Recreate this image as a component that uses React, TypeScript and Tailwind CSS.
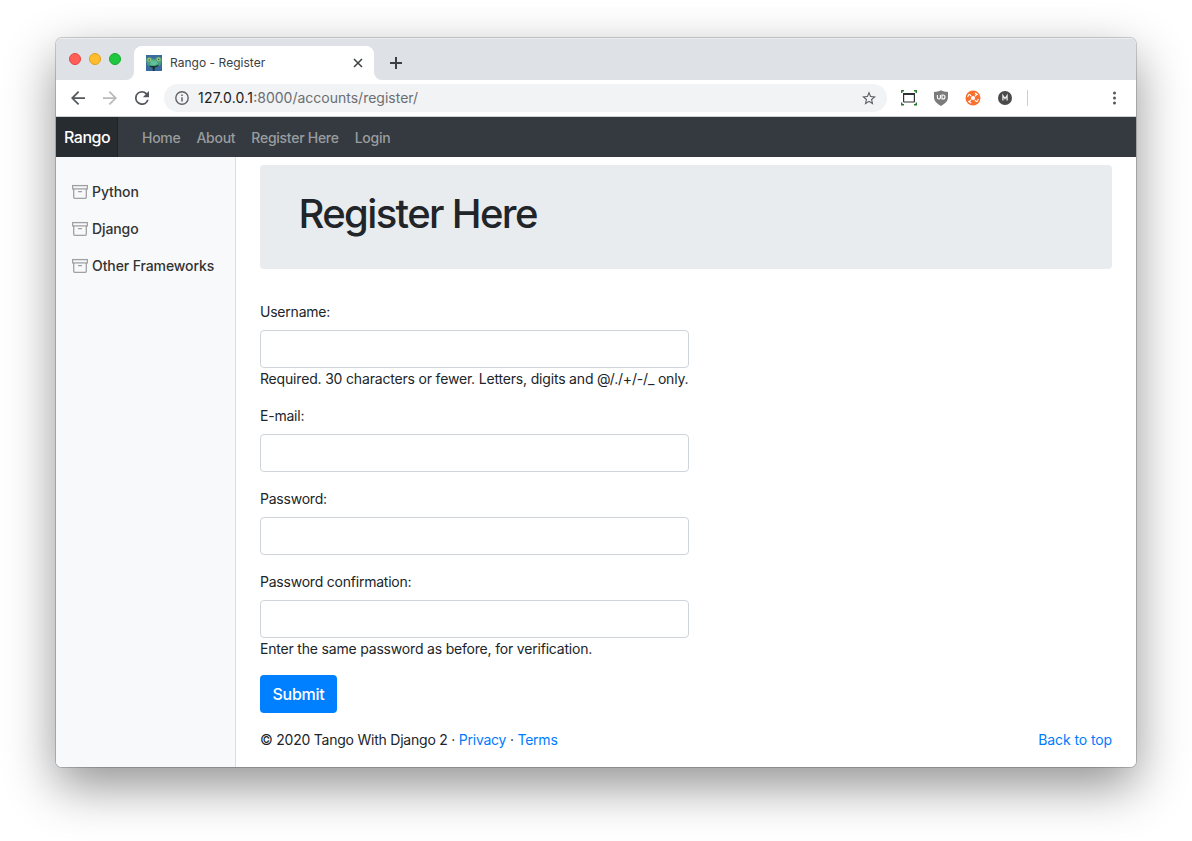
import React from "react";

function Favicon() {
  return (
    <svg width="16" height="16" viewBox="0 0 16 16" className="shrink-0">
      <rect width="16" height="16" fill="#3a6a9e" />
      <path d="M0 5C0 3 2 2 4 2.300 5.700 2.500 6.500 4 8 4s2-2 4-2.200c2.200-.2 4 1.200 4 3.200 0 1.800-1 2.200-1 3.500 0 2-1.800 3-4 3H5C2.500 11.500 1 10 1 8.500 1 7.500 0 7 0 5z" fill="#4a9f7e" />
      <path d="M5 5.500h5l2 3-3.500 2L4 9.500z" fill="#5fc09a" />
      <circle cx="3.300" cy="4.800" r="2" fill="#9cc27c" />
      <circle cx="12.600" cy="4.400" r="2" fill="#9cc27c" />
      <circle cx="3.200" cy="4.900" r=".7" fill="#265244" />
      <circle cx="12.700" cy="4.500" r=".7" fill="#265244" />
      <path d="M3 10.500c3 .8 7 .8 10-.7l-1 1.700-3 .7-.5 3.800H7l-.5-3.600-2.500-.7z" fill="#17352f" />
    </svg>
  );
}

function ArchiveIcon() {
  return (
    <svg width="16" height="16" viewBox="0 0 16 16" fill="none" stroke="#a0a1a3" strokeWidth="1.300" className="shrink-0">
      <rect x=".6" y="1.600" width="14.800" height="3.300" />
      <path d="M1.700 5v8.300q0 1 1 1h10.600q1 0 1-1V5" />
      <path d="M6 7.600h4" />
    </svg>
  );
}

function TabStrip() {
  return (
    <div className="flex h-[42px] bg-[#dee1e6] shadow-[inset_0_1px_0_#eceef0]">
      <div className="flex w-[70px] gap-2 pl-[13px] pt-[15px]">
        <span className="size-3 shrink-0 rounded-full border border-[#e2463f] bg-[#ff5f57]" />
        <span className="size-3 shrink-0 rounded-full border border-[#e1a116] bg-[#ffbd2e]" />
        <span className="size-3 shrink-0 rounded-full border border-[#12ac28] bg-[#1fc840]" />
      </div>
      <svg width="8" height="8" className="self-end"><path d="M8 0v8H0A8 8 0 0 0 8 0z" fill="#fff" /></svg>
      <div className="mt-2 flex h-[34px] w-[240px] items-center rounded-t-lg bg-white pl-3 pr-[11px]">
        <Favicon />
        <span className="ml-2 text-[12px] tracking-[0.03px] text-[#3c4043]">Rango - Register</span>
        <svg width="10" height="10" viewBox="0 0 10 10" className="ml-auto" stroke="#3c4043" strokeWidth="1.500"><path d="M1 1l8 8M9 1l-8 8" /></svg>
      </div>
      <svg width="8" height="8" className="self-end"><path d="M0 0v8h8A8 8 0 0 1 0 0z" fill="#fff" /></svg>
      <svg width="12" height="12" viewBox="0 0 12 12" className="ml-2 mt-[19px]" stroke="#3c4043" strokeWidth="2"><path d="M6 0v12M0 6h12" /></svg>
    </div>
  );
}

function Toolbar() {
  return (
    <div className="flex h-[37px] items-center border-b border-[#cfd1d3] bg-white pl-[15px]">
      <svg width="14" height="14" viewBox="4 4 16 16" fill="#54585d"><path d="M20 11H7.830l5.590-5.590L12 4l-8 8 8 8 1.410-1.410L7.830 13H20z" /></svg>
      <svg width="14" height="14" viewBox="4 4 16 16" fill="#b8babd" className="ml-[18px]"><path d="M12 4l-1.410 1.410L16.170 11H4v2h12.170l-5.580 5.590L12 20l8-8z" /></svg>
      <svg width="14" height="14" viewBox="4 4 16 16" fill="#54585d" className="ml-[18px]"><path d="M17.650 6.350A7.950 7.950 0 0 0 12 4a8 8 0 1 0 7.730 10h-2.080A6 6 0 1 1 12 6c1.660 0 3.140.69 4.220 1.780L13 11h7V4z" /></svg>
      <div className="ml-[15px] flex h-7 w-[723px] items-center rounded-full bg-[#f1f3f4] pl-[11px] pr-[11px]">
        <svg width="14" height="14" viewBox="0 0 14 14" fill="none" stroke="#5f6368" strokeWidth="1.400"><circle cx="7" cy="7" r="6.200" /><path d="M7 6.200v4.200M7 3.600V5" strokeWidth="1.500" /></svg>
        <span className="ml-[9px] pb-0.5 text-[14px] text-[#6b6e72]"><span className="tracking-[0.22px] text-[#202124]">127.0.0.1</span>:8000/accounts/register/</span>
        <svg width="14" height="14" viewBox="2 2 20 19" fill="#5f6368" className="ml-auto"><path d="M22 9.240l-7.190-.62L12 2 9.190 8.630 2 9.240l5.460 4.730L5.820 21 12 17.270 18.180 21l-1.630-7.030L22 9.240zM12 15.400l-3.760 2.270 1-4.280-3.320-2.880 4.380-.38L12 6.100l1.710 4.040 4.380.38-3.320 2.880 1 4.280L12 15.400z" /></svg>
      </div>
      <svg width="16" height="16" viewBox="0 0 16 16" className="ml-[14px]" fill="none"><path d="M.7 3V.7H3M13 .7h2.300V3M.7 12.500v2.300H3M13 14.800h2.300v-2.300" stroke="#287b2c" strokeWidth="1.400" /><rect x="2.600" y="4" width="10.800" height="8" rx=".5" stroke="#303134" strokeWidth="1.200" /><path d="M2 4h12" stroke="#303134" strokeWidth="2" /></svg>
      <svg width="16" height="16" viewBox="0 0 16 16" className="ml-4"><path d="M8 .3C6 1.500 3.500 2 1 2v5c0 4 2.500 6.500 7 9 4.500-2.500 7-5 7-9V2C12.500 2 10 1.500 8 .3z" fill="#7b7b7b" /><path d="M4.400 5v2.500q0 1.500 1.500 1.500t1.500-1.500V5M9 5v4h1q2 0 2-2t-2-2z" fill="none" stroke="#fff" strokeWidth="1.100" /></svg>
      <svg width="16" height="16" viewBox="0 0 16 16" className="ml-4"><circle cx="8" cy="8" r="7.500" fill="#f96f2d" /><circle cx="8" cy="8" r="2.100" fill="#fff" /><path d="M2.800 6.500l1.200-2M4.800 4.600l1 1M10.300 3.200l2 1.300M11.300 4.800l-1 1M13.200 9.500l-1.200 2M11.200 11.400l-1-1M5.700 12.800l-2-1.300M4.700 11.200l1-1" stroke="#fff" strokeWidth="1.200" strokeLinecap="round" /></svg>
      <svg width="14" height="14" viewBox="0 0 14 14" className="ml-[17px]"><circle cx="7" cy="7" r="7" fill="#4a4a4a" /><path d="M4.900 9.500v-5L7 7.500l2.100-3v5" fill="none" stroke="#e6e6e6" strokeWidth="1.300" /></svg>
      <span className="ml-[15px] h-4 w-px bg-[#cbcdcf]" />
      <svg width="4" height="14" viewBox="0 0 4 14" fill="#54585d" className="ml-[84px]"><circle cx="2.500" cy="2" r="1.500" /><circle cx="2.500" cy="7" r="1.500" /><circle cx="2.500" cy="12" r="1.500" /></svg>
    </div>
  );
}

function Field({ label, help }: { label: string; help?: React.ReactNode }) {
  return (
    <div className="flex flex-col">
      <label className="mb-2 h-[21px] tracking-[-0.22px] leading-[21px]">{label}</label>
      <input className="h-[38px] w-[429px] rounded border border-[#ced4da] bg-white px-3" />
      {help}
    </div>
  );
}

export default function App() {
  return (
    <div className="h-[841px] w-[1192px] bg-white px-[56px] pt-[38px] font-['Inter',sans-serif]">
      <div className="flex h-[729px] flex-col overflow-hidden rounded-[6px] shadow-[0_0_0_1px_rgba(0,0,0,0.18),0_19px_50px_rgba(0,0,0,0.43)]">
        <TabStrip />
        <Toolbar />
        <nav className="flex h-10 items-center bg-[#343a40] text-[14px] text-[#9a9d9f]">
          <a className="flex h-10 w-[62px] items-center border-r border-[#1f2326] bg-[#272c30] pl-2 pb-px text-[16px] font-[450] tracking-[-0.5px] text-white">Rango</a>
          <div className="ml-6 flex gap-4 pt-px font-[450] tracking-[-0.27px]">
            <a>Home</a>
            <a>About</a>
            <a>Register Here</a>
            <a>Login</a>
          </div>
        </nav>
        <div className="flex flex-1 bg-white text-[14px] tracking-[-0.18px] text-[#212529]">
          <aside className="flex w-[180px] flex-col gap-4 border-r border-[#dcdddf] bg-[#f8f9fa] pl-4 pt-6 font-medium tracking-[-0.1px] text-[#333]">
            {["Python", "Django", "Other Frameworks"].map((name) => (
              <a key={name} className="flex h-[21px] items-center gap-1 whitespace-nowrap">
                <ArchiveIcon />
                <span>{name}</span>
              </a>
            ))}
          </aside>
          <main className="flex-1 pl-6 pr-6 pt-2">
            <div className="h-[104px] rounded bg-[#e9ecef] pl-[38.500px] pt-[25px]">
              <h1 className="text-[40px] font-medium leading-[48px] tracking-[-1.640px]">Register Here</h1>
            </div>
            <form className="mt-8">
              <Field label="Username:" help={<span className="h-[21px] whitespace-nowrap leading-[22px]">Required. 30 characters or fewer. Letters, digits and @/./+/-/_ only.</span>} />
              <div className="h-4" />
              <Field label="E-mail:" />
              <div className="h-4" />
              <Field label="Password:" />
              <div className="h-4" />
              <Field label="Password confirmation:" help={<span className="h-[21px] tracking-[-0.19px] leading-[22px]">Enter the same password as before, for verification.</span>} />
              <button type="button" className="mt-4 h-[38px] w-[77px] rounded bg-[#0080ff] text-[16px] font-[450] tracking-[-0.25px] text-white">Submit</button>
            </form>
            <footer className="mt-4 flex justify-between leading-[21px]">
              <p className="tracking-[-0.230px]">© 2020 Tango With Django 2 · <a className="text-[#007bff]">Privacy</a> · <a className="text-[#007bff]">Terms</a></p>
              <a className="tracking-[-0.1px] text-[#007bff]">Back to top</a>
            </footer>
          </main>
        </div>
      </div>
    </div>
  );
}
